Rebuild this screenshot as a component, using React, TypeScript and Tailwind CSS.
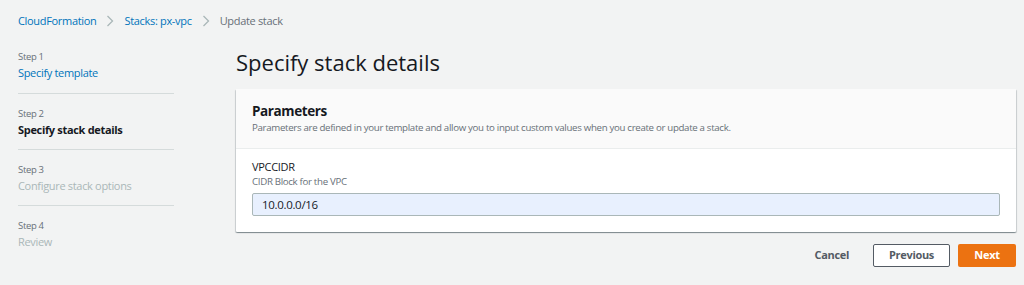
import React from "react";

const steps = [
  { label: "Step 1", title: "Specify template", state: "done" },
  { label: "Step 2", title: "Specify stack details", state: "current" },
  { label: "Step 3", title: "Configure stack options", state: "todo" },
  { label: "Step 4", title: "Review", state: "todo" },
];

const Chevron = () => (
  <svg width="8" height="12" viewBox="0 0 8 12" className="mx-[10px] shrink-0">
    <path d="M1.5 1 L6.5 6 L1.5 11" fill="none" stroke="#aab7b8" strokeWidth="1.3" />
  </svg>
);

export default function App() {
  return (
    <div className="h-[285px] w-full overflow-hidden bg-[#f2f3f3] font-['Open_Sans',sans-serif] tracking-[-0.02em] text-[#16191f]">
      {/* Breadcrumbs */}
      <div className="flex h-[42px] items-center px-[18px] text-[11px]">
        <span className="text-[#0073bb]">CloudFormation</span>
        <Chevron />
        <span className="text-[#0073bb]">Stacks: px-vpc</span>
        <Chevron />
        <span className="text-[#687078]">Update stack</span>
      </div>

      <div className="flex">
        {/* Wizard nav */}
        <nav className="ml-[18px] w-[156px] shrink-0">
          {steps.map((s, i) => (
            <div
              key={s.label}
              className={
                i === 0
                  ? "pt-[8px] pb-[13px]"
                  : "border-t border-[#d5dbdb] pt-[13px] pb-[12px]"
              }
            >
              <div className="h-[14px] text-[9.5px] leading-[14px] text-[#687078]">{s.label}</div>
              <div
                className={
                  "h-[16px] text-[11px] leading-[17px] " +
                  (s.state === "done"
                    ? "text-[#0073bb]"
                    : s.state === "current"
                      ? "font-bold text-[#16191f]"
                      : "text-[#aab7b8]")
                }
              >
                {s.title}
              </div>
            </div>
          ))}
        </nav>

        {/* Main content */}
        <main className="ml-[62px] flex-1 pr-[8px]">
          <h1 className="pt-[6px] text-[22px] leading-[28px] font-normal tracking-normal text-[#16191f]">
            Specify stack details
          </h1>

          <section className="mt-[13px] rounded-[1px] bg-white shadow-[0_1px_1px_0_rgba(0,28,36,0.3),1px_1px_1px_0_rgba(0,28,36,0.15),-1px_1px_1px_0_rgba(0,28,36,0.15)]">
            <div className="border-b border-[#eaeded] bg-[#fafafa] px-[16px] pt-[12px] pb-[13px]">
              <h2 className="text-[13.5px] leading-[20px] font-bold tracking-[-0.03em] text-[#16191f]">
                Parameters
              </h2>
              <p className="text-[9.7px] leading-[14px] text-[#687078]">
                Parameters are defined in your template and allow you to input custom values when you
                create or update a stack.
              </p>
            </div>
            <div className="px-[16px] pt-[9px] pb-[16px]">
              <div className="text-[11px] leading-[17px] text-[#16191f]">VPCCIDR</div>
              <div className="text-[9.7px] leading-[14px] text-[#687078]">CIDR Block for the VPC</div>
              <div className="mt-[4px] flex h-[23px] items-center rounded-[2px] border border-[#aab7b8] bg-[#e8f0fe] px-[9px] text-[11.5px] text-[#16191f]">
                10.0.0.0/16
              </div>
            </div>
          </section>

          <div className="mt-[12px] flex items-center justify-end">
            <button className="mr-[24px] text-[11px] font-bold text-[#545b64]">Cancel</button>
            <button className="mr-[8px] h-[23px] w-[77px] rounded-[2px] border border-[#545b64] bg-white text-[11px] font-bold text-[#545b64]">
              Previous
            </button>
            <button className="h-[23px] w-[58px] rounded-[2px] bg-[#ec7211] text-[11px] font-bold text-white">
              Next
            </button>
          </div>
        </main>
      </div>
    </div>
  );
}
